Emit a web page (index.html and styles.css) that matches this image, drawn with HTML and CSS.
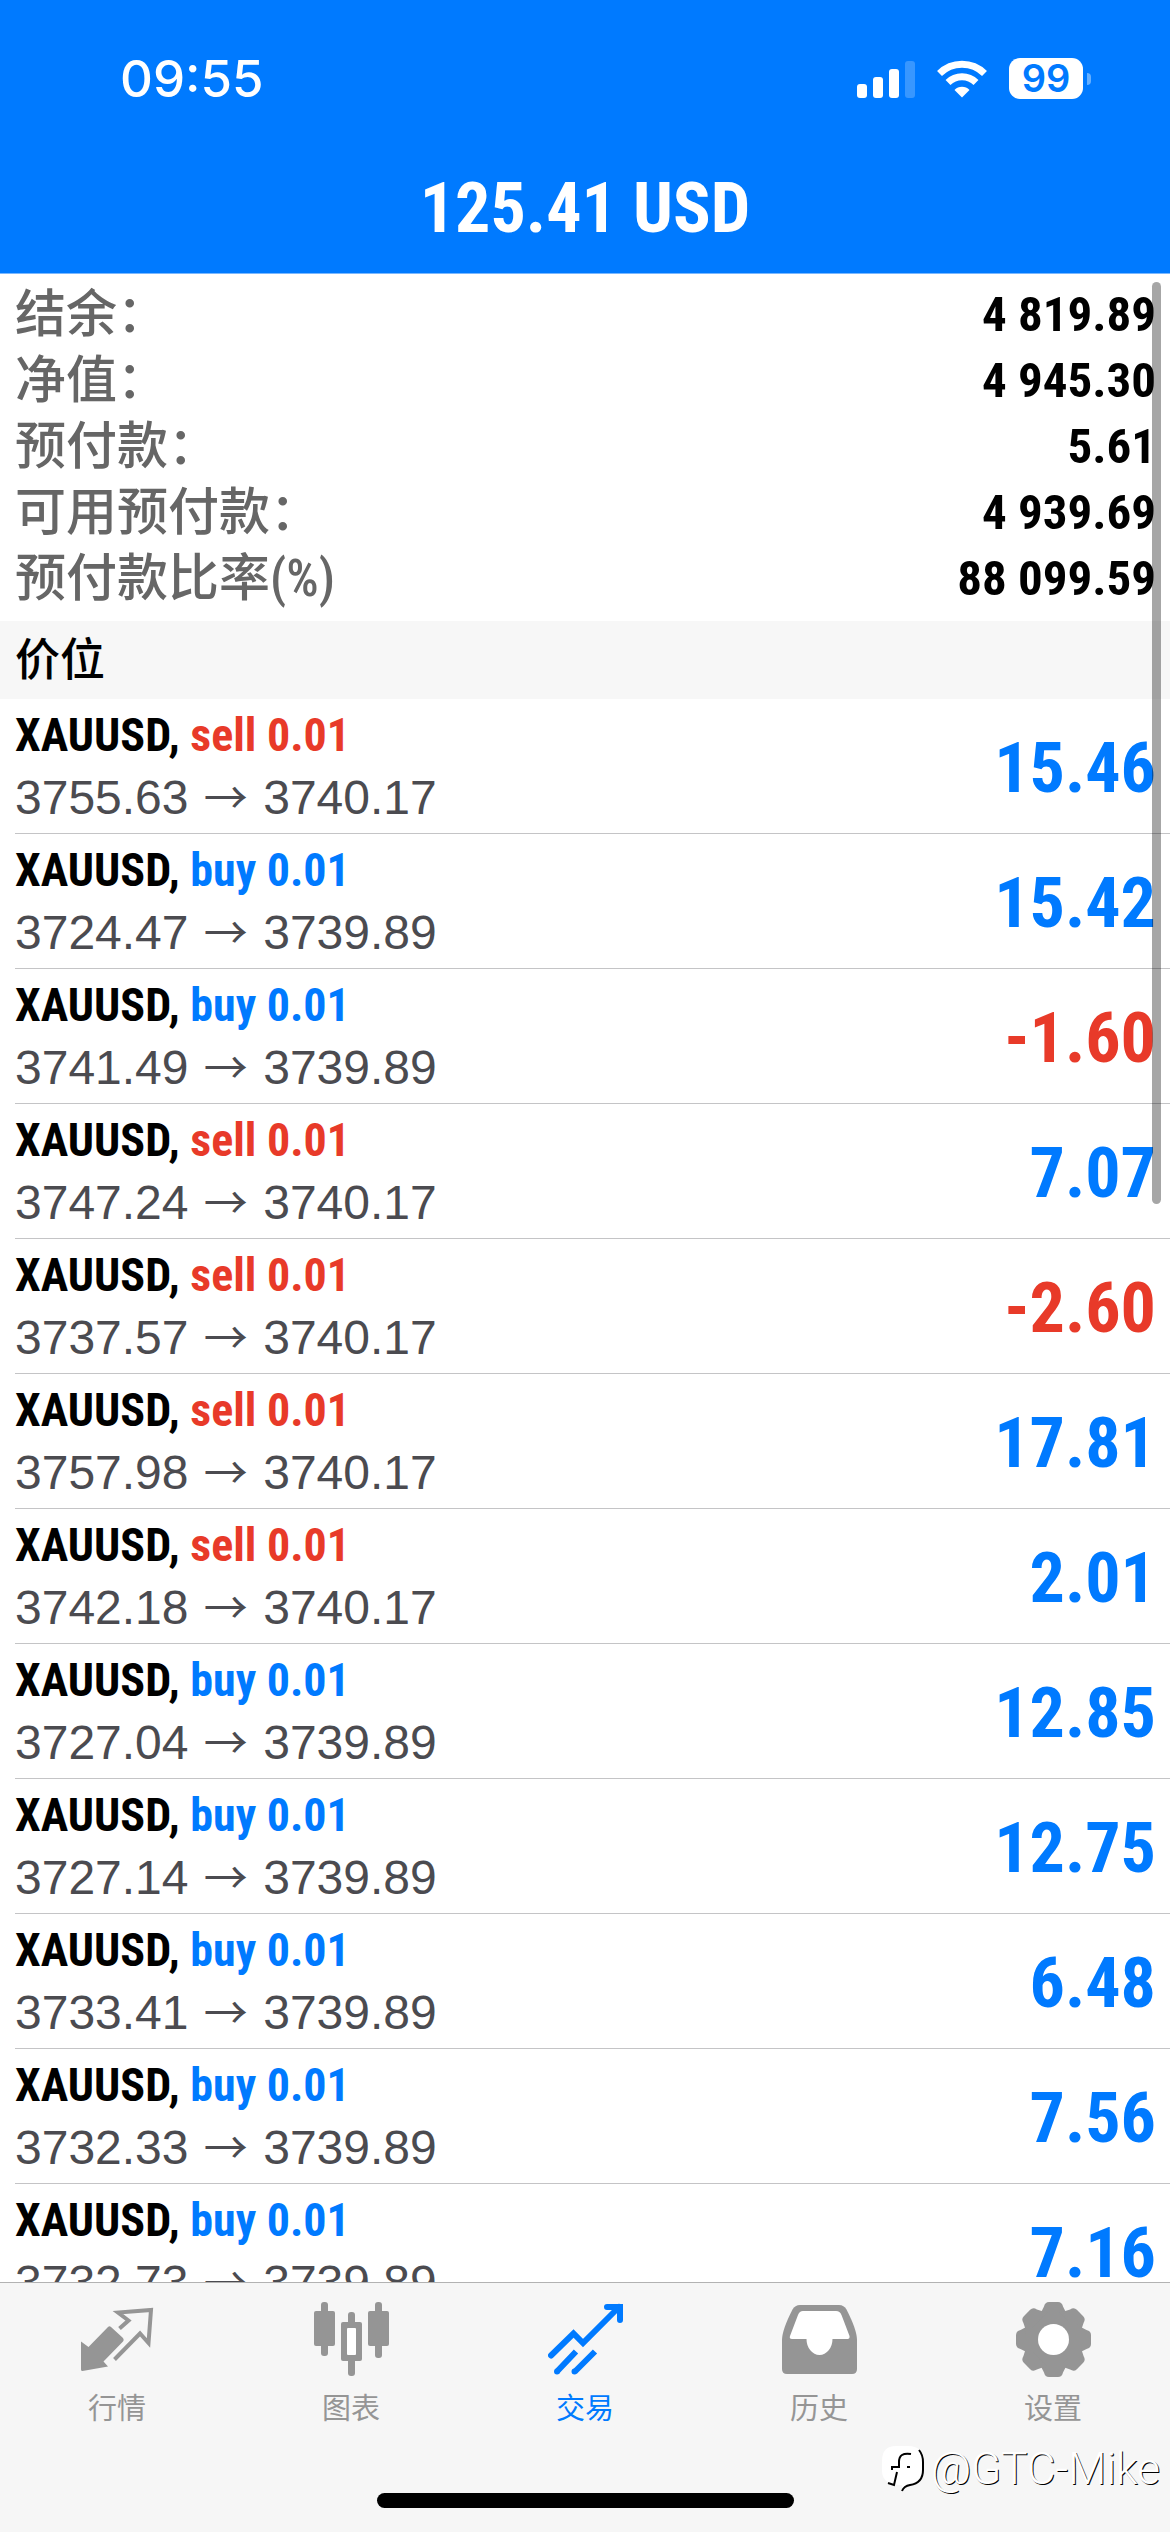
FILE: index.html
```html
<!DOCTYPE html>
<html lang="zh-CN">
<head>
<meta charset="utf-8">
<meta name="viewport" content="width=device-width, initial-scale=1">
<title>交易</title>
<link rel="stylesheet" href="styles.css">
</head>
<body>
<div class="screen">
  <header class="header">
    <div class="status">
      <time class="status-time">09:55</time>
      <div class="status-icons">
        <svg class="signal" width="58" height="38" viewBox="0 0 58 38" fill="#fff" aria-hidden="true">
          <rect x="0" y="24" width="10" height="14" rx="3"/><rect x="16" y="17" width="10" height="21" rx="3"/><rect x="32" y="9" width="10" height="29" rx="3"/><rect x="48" y="1" width="10" height="37" rx="3" opacity=".22"/>
        </svg>
        <svg class="wifi" width="50" height="38" viewBox="0 0 50 38" fill="none" stroke="#fff" aria-hidden="true">
          <path d="M2.500 13.500a32 32 0 0 1 45 0" stroke-width="7"/><path d="M11 22.500a20 20 0 0 1 28 0" stroke-width="7"/><path d="M17.500 30a10.500 10.500 0 0 1 15 0L25 37.500z" fill="#fff" stroke="none"/>
        </svg>
        <span class="battery">99</span>
      </div>
    </div>
    <h1 class="title">125.41 USD</h1>
  </header>

  <main class="content">
    <dl class="summary">
      <div class="summary-row"><dt>结余：</dt><dd>4 819.89</dd></div>
      <div class="summary-row"><dt>净值：</dt><dd>4 945.30</dd></div>
      <div class="summary-row"><dt>预付款：</dt><dd>5.61</dd></div>
      <div class="summary-row"><dt>可用预付款：</dt><dd>4 939.69</dd></div>
      <div class="summary-row"><dt>预付款比率(%)</dt><dd>88 099.59</dd></div>
    </dl>
    <h2 class="section">价位</h2>
    <ul class="trades">
      <li class="trade"><div><p class="symbol">XAUUSD, <span class="sell">sell 0.01</span></p><p class="prices">3755.63 <span class="arrow">→</span> 3740.17</p></div><span class="profit buy">15.46</span></li>
      <li class="trade"><div><p class="symbol">XAUUSD, <span class="buy">buy 0.01</span></p><p class="prices">3724.47 <span class="arrow">→</span> 3739.89</p></div><span class="profit buy">15.42</span></li>
      <li class="trade"><div><p class="symbol">XAUUSD, <span class="buy">buy 0.01</span></p><p class="prices">3741.49 <span class="arrow">→</span> 3739.89</p></div><span class="profit sell">-1.60</span></li>
      <li class="trade"><div><p class="symbol">XAUUSD, <span class="sell">sell 0.01</span></p><p class="prices">3747.24 <span class="arrow">→</span> 3740.17</p></div><span class="profit buy">7.07</span></li>
      <li class="trade"><div><p class="symbol">XAUUSD, <span class="sell">sell 0.01</span></p><p class="prices">3737.57 <span class="arrow">→</span> 3740.17</p></div><span class="profit sell">-2.60</span></li>
      <li class="trade"><div><p class="symbol">XAUUSD, <span class="sell">sell 0.01</span></p><p class="prices">3757.98 <span class="arrow">→</span> 3740.17</p></div><span class="profit buy">17.81</span></li>
      <li class="trade"><div><p class="symbol">XAUUSD, <span class="sell">sell 0.01</span></p><p class="prices">3742.18 <span class="arrow">→</span> 3740.17</p></div><span class="profit buy">2.01</span></li>
      <li class="trade"><div><p class="symbol">XAUUSD, <span class="buy">buy 0.01</span></p><p class="prices">3727.04 <span class="arrow">→</span> 3739.89</p></div><span class="profit buy">12.85</span></li>
      <li class="trade"><div><p class="symbol">XAUUSD, <span class="buy">buy 0.01</span></p><p class="prices">3727.14 <span class="arrow">→</span> 3739.89</p></div><span class="profit buy">12.75</span></li>
      <li class="trade"><div><p class="symbol">XAUUSD, <span class="buy">buy 0.01</span></p><p class="prices">3733.41 <span class="arrow">→</span> 3739.89</p></div><span class="profit buy">6.48</span></li>
      <li class="trade"><div><p class="symbol">XAUUSD, <span class="buy">buy 0.01</span></p><p class="prices">3732.33 <span class="arrow">→</span> 3739.89</p></div><span class="profit buy">7.56</span></li>
      <li class="trade"><div><p class="symbol">XAUUSD, <span class="buy">buy 0.01</span></p><p class="prices">3732.73 <span class="arrow">→</span> 3739.89</p></div><span class="profit buy">7.16</span></li>
    </ul>
    <div class="scroll-thumb"></div>
  </main>

  <footer class="footer">
    <nav class="tabs">
      <button class="tab" type="button">
        <svg class="tab-icon" viewBox="0 0 75 75" aria-hidden="true"><path fill="currentColor" d="M1 39.500L8.500 45 28 25q1.500-1.500 3 0L43 36q1.500 2 0 3.500L23.500 59.500l4.500 5L2.500 69Q1 69 1 67.500z"/><path d="M39.500 26.500l9-8L38 10.500 71 8 68.500 41 60 31.500 34.500 57.500" fill="none" stroke="currentColor" stroke-width="4"/></svg>
        <span>行情</span>
      </button>
      <button class="tab" type="button">
        <svg class="tab-icon" viewBox="0 0 75 75" fill="currentColor" aria-hidden="true"><rect y="9" width="21" height="35" rx="2"/><rect x="7" width="7" height="54" rx="3"/><rect x="27" y="20" width="21" height="39" rx="2"/><rect x="34" y="10" width="7" height="64" rx="3"/><rect x="33" y="26" width="9" height="27" rx="1" fill="#fff"/><rect x="54" y="9" width="21" height="35" rx="2"/><rect x="61" width="7" height="56" rx="3"/></svg>
        <span>图表</span>
      </button>
      <button class="tab tab-active" type="button" aria-current="page">
        <svg class="tab-icon" viewBox="0 0 75 75" fill="none" stroke="currentColor" stroke-width="6" aria-hidden="true"><path d="M3 53.500L25.500 31.500l9.500 9.500L71 5M59 5h13v13" stroke-linecap="round"/><path d="M9 69.500l19-20M27 69.500l20-20"/><path d="M9 69.500h.01M26.500 69.500h.01" stroke-linecap="round"/></svg>
        <span>交易</span>
      </button>
      <button class="tab" type="button">
        <svg class="tab-icon" viewBox="0 0 75 75" aria-hidden="true"><path fill="currentColor" d="M18 3h39q5 0 7.500 4.500Q75 28 75 38v29q0 5-5 5H5q-5 0-5-5V38Q0 28 10.500 7.500 13 3 18 3z"/><path fill="#fff" d="M21 9h33q4 0 5.500 4l8 21q.5 3-2 3H50.500a13 16 0 0 1-26 0H10q-3 0-2-3l8-21q1.500-4 5-4z"/></svg>
        <span>历史</span>
      </button>
      <button class="tab" type="button">
        <svg class="tab-icon" viewBox="-37.500 -37.500 75 75" fill="currentColor" aria-hidden="true"><circle r="29"/><path id="tooth" d="M-15-24Q-12-27-9.500-33-8.500-37.500-4.500-37.500h9Q8.500-37.500 9.500-33 12-27 15-24z"/><use href="#tooth" transform="rotate(45)"/><use href="#tooth" transform="rotate(90)"/><use href="#tooth" transform="rotate(135)"/><use href="#tooth" transform="rotate(180)"/><use href="#tooth" transform="rotate(225)"/><use href="#tooth" transform="rotate(270)"/><use href="#tooth" transform="rotate(315)"/><circle r="15.500" fill="#fff"/></svg>
        <span>设置</span>
      </button>
    </nav>
    <div class="home-indicator"></div>
    <div class="watermark">
      <svg width="42" height="48" viewBox="0 0 42 48" aria-hidden="true"><path fill="#fff" d="M14 1h12Q41 1 41 16v9Q41 38 28 40q-6 1-8 6v-6Q0 40 0 26V16Q0 1 14 1z"/><path fill="none" stroke="#000" stroke-width="2" d="M37 5Q41 10 41 17v8Q41 38 28 40q-6 1-8 6M29 9Q17 7 17 17v5h-7v3M15 27l-3 13-6-2M25 22h3"/></svg>
      <span>@GTC-Mike</span>
    </div>
  </footer>
</div>
</body>
</html>
```
FILE: styles.css
```css
* { box-sizing: border-box; }

body, h1, h2, p, dl, dd, ul { margin: 0; padding: 0; }

body {
  background: #fff;
  color: #000;
  font-family: "Roboto Condensed", "Noto Sans CJK SC", sans-serif;
}

.screen {
  display: flex;
  flex-direction: column;
  height: 100vh;
}

.header {
  flex: none;
  background: #007aff;
  color: #fff;
  border-bottom: 1px solid #7ab8ff;
}

.status {
  display: flex;
  justify-content: space-between;
  align-items: center;
  height: 141px;
  padding: 16px 87px 0 120px;
}

.status-time {
  font: 500 51px/60px Inter, sans-serif;
}

.status-icons {
  display: flex;
  align-items: center;
  gap: 22px;
}

.battery {
  position: relative;
  width: 74px;
  height: 41px;
  border-radius: 11px;
  background: #fff;
  color: #007aff;
  font: 600 38px/41px Inter, sans-serif;
  text-align: center;
}

.battery::after {
  content: "";
  position: absolute;
  left: 78px;
  top: 15px;
  width: 4px;
  height: 12px;
  border-radius: 0 4px 4px 0;
  background: #66b0ff;
}

.title {
  padding-top: 2px;
  font-size: 70px;
  font-weight: 700;
  line-height: 130px;
  text-align: center;
}

.content {
  position: relative;
  flex: 1;
  min-height: 0;
  overflow: hidden;
}

.summary { padding: 8px 14px 9px 15px; }

.summary-row {
  display: flex;
  justify-content: space-between;
  height: 66px;
  line-height: 66px;
}

.summary dt {
  color: #666;
  font-size: 51px;
  font-weight: 500;
}

.summary dd {
  font-size: 49px;
  font-weight: 700;
}

.section {
  padding: 2px 15px 0;
  background: #f7f7f7;
  font-size: 45px;
  font-weight: 500;
  line-height: 76px;
}

.trades { list-style: none; }

.trade {
  display: flex;
  justify-content: space-between;
  align-items: center;
  height: 135px;
  margin-left: 15px;
  padding-right: 14px;
  border-bottom: 1px solid #c4c4c6;
}

.symbol {
  font-size: 46px;
  font-weight: 700;
  line-height: 64px;
}

.prices {
  color: #4b4b50;
  font-family: "Liberation Sans", sans-serif;
  font-size: 48px;
  line-height: 62px;
}

.arrow {
  padding: 0 2px;
  font-family: "Noto Sans CJK SC", sans-serif;
  font-size: 44px;
  line-height: 1;
}

.profit {
  padding-top: 4px;
  font-size: 70px;
  font-weight: 700;
}

.buy { color: #007aff; }
.sell { color: #e83a29; }

.scroll-thumb {
  position: absolute;
  top: 8px;
  right: 9px;
  width: 9px;
  height: 922px;
  border-radius: 5px;
  background: rgba(0, 0, 0, .35);
}

.footer {
  position: relative;
  flex: none;
  height: 250px;
  border-top: 1px solid #b2b2b2;
  background: #f6f6f6;
}

.tabs { display: flex; }

.tab {
  display: flex;
  flex: 1;
  flex-direction: column;
  align-items: center;
  gap: 10px;
  padding: 19px 0 0;
  border: 0;
  background: none;
  color: #959595;
  font: 400 29px/38px "Noto Sans CJK SC", sans-serif;
}

.tab-active { color: #007aff; }

.tab-icon {
  width: 75px;
  height: 75px;
}

.home-indicator {
  position: absolute;
  left: 50%;
  bottom: 24px;
  width: 417px;
  height: 15px;
  margin-left: -208px;
  border-radius: 8px;
  background: #000;
}

.watermark {
  position: absolute;
  right: 10px;
  bottom: 36px;
  display: flex;
  align-items: center;
  gap: 7px;
  color: #fff;
  font: 300 44px/54px Roboto, sans-serif;
  text-shadow: 1px 1px 0 #000;
}
```
